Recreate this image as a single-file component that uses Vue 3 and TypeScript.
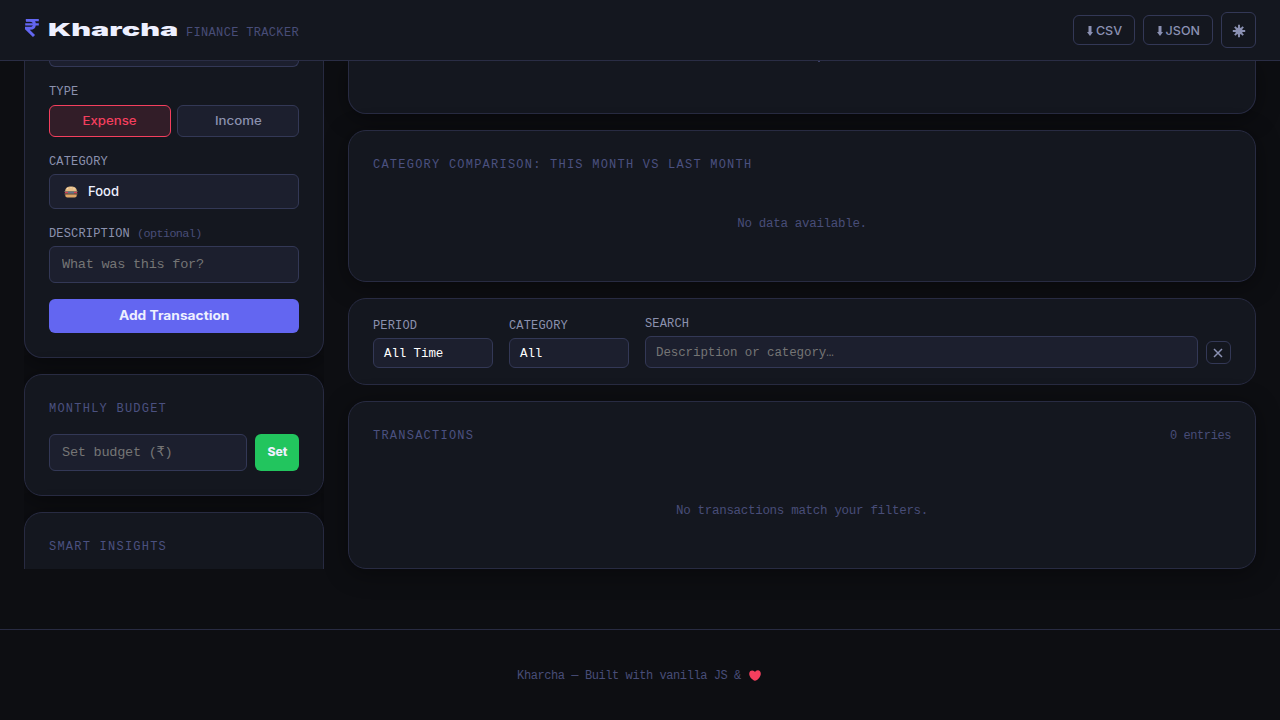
<script setup lang="ts">
import { ref } from 'vue'

type Kind = 'expense' | 'income'

const kind = ref<Kind>('expense')
const description = ref('')
const budget = ref('')
const search = ref('')
const exports: string[] = ['CSV', 'JSON']
</script>

<template>
  <div class="page">
    <header class="topbar">
      <div class="brand">
        <svg class="rupee" viewBox="0 0 14 18" width="14" height="18">
          <path d="M.8 1.2H13.8M.2 5.4H13.8" fill="none" stroke="#6366f1" stroke-width="2.3" />
          <path d="M1 1.2H5C8.2 1.2 9.4 3 9.4 5.2S8 9.3 5 9.3H1.2L9 17" fill="none" stroke="#6366f1" stroke-width="2.9" />
        </svg>
        <span class="name"><span class="wide">Kharcha</span></span>
        <span class="tagline">FINANCE TRACKER</span>
      </div>
      <div class="actions">
        <button v-for="e in exports" :key="e" class="btn" :class="e.toLowerCase()">
          <svg viewBox="0 0 6 10" width="6" height="10"><path d="M1.5 0h3v6H6L3 10 0 6h1.5z" fill="currentColor" /></svg>
          <span class="wide">{{ e }}</span>
        </button>
        <button class="btn theme" aria-label="Theme">
          <svg viewBox="-7 -7 14 14" width="14" height="14">
            <circle r="3.6" fill="currentColor" />
            <path d="M0-6.2V6.2M-6.2 0H6.2M-4.2-4.2L4.2 4.2M4.2-4.2L-4.2 4.2" stroke="currentColor" stroke-width="1.9" />
          </svg>
        </button>
      </div>
    </header>

    <div class="layout">
      <aside class="sidebar">
        <section class="card cut form">
          <div class="field-end"></div>
          <div class="label type-label">TYPE</div>
          <div class="toggle">
            <button :class="{ on: kind === 'expense' }" @click="kind = 'expense'"><span class="wide">Expense</span></button>
            <button :class="{ on: kind === 'income' }" @click="kind = 'income'"><span class="wide">Income</span></button>
          </div>
          <div class="label cat-label">CATEGORY</div>
          <button class="control category">
            <svg viewBox="0 0 14 12" width="14" height="12">
              <path d="M1.2 5C1.2 1.8 3.6.5 7 .5S12.8 1.8 12.8 5z" fill="#e6bd88" />
              <path d="M3.2 2.5h1M6.5 1.6h1M9.5 2.8h1" stroke="#fff0cf" stroke-width=".8" />
              <path d="M.5 5h13v1.2H.5z" fill="#8c7a62" />
              <path d="M1 6h12v1.2H1z" fill="#d83d5b" />
              <path d="M.5 7.2h13v1.3H.5z" fill="#86604d" />
              <path d="M4 5.6h6v1.8H4z" fill="#607287" />
              <path d="M1.3 8.4h11.4v1.2c0 1.2-.8 1.9-2 1.9H3.3c-1.2 0-2-.7-2-1.9z" fill="#dda566" />
            </svg>
            <span>Food</span>
          </button>
          <label class="label desc-label" for="desc">DESCRIPTION<span class="optional">(optional)</span></label>
          <input id="desc" v-model="description" class="control text" placeholder="What was this for?">
          <button class="submit"><span class="wide">Add Transaction</span></button>
        </section>

        <section class="card budget">
          <h2>MONTHLY BUDGET</h2>
          <div class="budget-row">
            <input v-model="budget" class="control text" placeholder="Set budget (₹)">
            <button class="set"><span class="wide">Set</span></button>
          </div>
        </section>

        <section class="card insights"><h2>SMART INSIGHTS</h2></section>
      </aside>

      <main class="content">
        <section class="card cut chart"><div class="descender"></div></section>
        <section class="card comparison">
          <h2>CATEGORY COMPARISON: THIS MONTH VS LAST MONTH</h2>
          <p class="empty">No data available.</p>
        </section>
        <section class="card filters">
          <div class="filter">
            <div class="label">PERIOD</div>
            <button class="control select">All Time</button>
          </div>
          <div class="filter">
            <div class="label">CATEGORY</div>
            <button class="control select">All</button>
          </div>
          <div class="filter grow">
            <label class="label" for="search">SEARCH</label>
            <input id="search" v-model="search" class="control search" placeholder="Description or category…">
          </div>
          <button class="clear" aria-label="Clear" @click="search = ''">
            <svg viewBox="0 0 10 10" width="10" height="10"><path d="M1 1l8 8M9 1L1 9" stroke="currentColor" stroke-width="1.5" /></svg>
          </button>
        </section>
        <section class="card transactions">
          <div class="head">
            <h2>TRANSACTIONS</h2>
            <span class="count">0 entries</span>
          </div>
          <p class="empty">No transactions match your filters.</p>
        </section>
      </main>
    </div>

    <footer class="footer">
      <span>Kharcha — Built with vanilla JS &amp;</span>
      <svg viewBox="0 0 12 11" width="12" height="11"><path d="M6 10.8C3.4 10.2.2 6.8.2 3.8.2 1.7 1.6.5 3.2.5 4.6.5 5.6 1.3 6 2.1 6.4 1.3 7.4.3 8.9.3c1.7 0 2.9 1.3 2.9 3.4C11.8 6.8 8.6 10.2 6 10.8z" fill="#f43f5e" /></svg>
    </footer>
  </div>
</template>

<style>
body { background: #0d0e12; }
</style>

<style scoped>
* { box-sizing: border-box; margin: 0; }
.page {
  height: 720px;
  overflow: hidden;
  display: flex;
  flex-direction: column;
  background: #0d0e12;
  color: #eef0ff;
  font: 12px/16px "Liberation Mono", monospace;
}
button, input { font: inherit; color: inherit; outline: none; }
button { padding: 0; display: flex; align-items: center; justify-content: center; cursor: pointer; white-space: nowrap; }
svg { flex: none; display: block; }
.wide { display: inline-block; font-family: Inter, sans-serif; letter-spacing: 0; }

.topbar {
  flex: none;
  height: 61px;
  padding: 0 24px;
  display: flex;
  align-items: center;
  justify-content: space-between;
  background: #14171f;
  border-bottom: 1px solid #2a2d45;
  position: relative;
  z-index: 1;
}
.brand { display: flex; align-items: center; height: 60px; }
.rupee { margin: 0 9px 4px 1px; }
.name { width: 138px; }
.name .wide { font-size: 18px; line-height: 24px; font-weight: 900; transform: scaleX(1.7); transform-origin: left; }
.tagline { font-size: 12px; letter-spacing: .33px; color: #484d78; padding-top: 5px; }
.actions { display: flex; align-items: center; gap: 8px; }
.btn { height: 30px; gap: 4px; border: 1px solid #333856; border-radius: 6px; background: transparent; color: #8b91b3; }
.btn .wide { font-size: 11.5px; font-weight: 500; transform: scaleX(1.09); padding-top: 1px; }
.btn svg { margin-top: 1px; }
.csv { width: 62px; }
.json { width: 70px; }
.theme { width: 35px; height: 36px; }

.layout { flex: none; height: 508px; padding: 0 24px; display: grid; grid-template-columns: 300px 1fr; gap: 24px; }
.sidebar, .content { display: flex; flex-direction: column; gap: 16px; min-width: 0; }
.sidebar { height: 508px; overflow: hidden; }
.card {
  flex: none;
  padding: 24px;
  background: #14171f;
  border: 1px solid #282b42;
  border-radius: 18px;
  box-shadow: 0 4px 24px rgba(0, 0, 0, .4);
}
.cut { border-top: 0; border-top-left-radius: 0; border-top-right-radius: 0; padding-top: 0; }
.form { height: 297px; display: flex; flex-direction: column; }
.field-end { flex: none; height: 6px; background: #1c1f2e; border: 1px solid #333856; border-top: 0; border-radius: 0 0 6px 6px; }
.label { font-size: 12px; line-height: 14px; letter-spacing: .16px; color: #8b91ae; }
.type-label { margin-top: 18px; }
.toggle { flex: none; display: grid; grid-template-columns: 1fr 1fr; gap: 6px; margin-top: 6px; height: 32px; }
.toggle button { border: 1px solid #333856; border-radius: 6px; background: #1c1f2e; color: #8b91ae; }
.toggle button.on { border-color: #f43f5e; background: #321d28; color: #f43f5e; }
.toggle .wide { font-size: 11.5px; font-weight: 500; transform: scaleX(1.15); }
.cat-label { margin-top: 18px; }
.control { border: 1px solid #333856; border-radius: 6px; background: #1c1f2e; }
.control::placeholder { color: #757575; opacity: 1; }
.category { flex: none; width: 100%; height: 35px; margin-top: 5px; padding-left: 14px; justify-content: flex-start; gap: 10px; font: 500 13px Inter, sans-serif; }
.category span { padding-bottom: 1px; }
.desc-label { margin-top: 18px; }
.optional { font-size: 11.8px; letter-spacing: -.6px; color: #484d78; margin-left: 7px; }
.text { width: 100%; height: 37px; padding: 0 12px; font-size: 13.6px; letter-spacing: -.28px; }
.desc-label + .text { flex: none; margin-top: 5px; }
.submit { flex: none; height: 34px; margin-top: 16px; border: 0; border-radius: 6px; background: #6366f1; }
.submit .wide { font-size: 12.5px; font-weight: 700; transform: scaleX(1.1); padding-bottom: 1px; }

h2 { font-size: 12px; line-height: 18px; font-weight: 400; letter-spacing: 1.23px; color: #4b5180; white-space: nowrap; padding-top: 1px; }
.budget { height: 122px; }
.budget-row { display: flex; gap: 8px; margin-top: 16px; }
.budget-row .text { flex: 1; min-width: 0; }
.set { width: 44px; height: 37px; border: 0; border-radius: 6px; background: #22c55e; }
.set .wide { font-size: 11.5px; font-weight: 800; transform: scaleX(1.06); padding-bottom: 1px; }
.insights { height: 122px; }

.chart { height: 53px; }
.descender { width: 2px; height: 1px; margin-left: 445px; background: #3a3f66; }
.comparison { height: 152px; }
.empty { text-align: center; color: #484d78; font-size: 12.5px; letter-spacing: -.3px; }
.comparison .empty { margin-top: 42px; }
.filters { height: 87px; padding: 16px 24px; display: flex; align-items: flex-end; box-shadow: none; }
.filter { width: 120px; margin-right: 16px; }
.filter.grow { flex: 1; width: auto; margin-right: 8px; }
.filter .label { display: block; }
.filter .control { width: 100%; display: flex; margin-top: 5px; padding: 1px 10px 0; font-size: 12.5px; letter-spacing: -.1px; }
.select { height: 30px; justify-content: flex-start; color: #fff; }
.search { height: 32px; }
.clear { width: 25px; height: 23px; margin-bottom: 4px; padding-right: 1px; border: 1px solid #333856; border-radius: 6px; background: transparent; color: #8b91b3; }
.transactions { height: 168px; }
.head { display: flex; justify-content: space-between; }
.count { font-size: 12px; line-height: 18px; letter-spacing: -.42px; color: #484d78; padding-top: 1px; }
.transactions .empty { margin-top: 58px; }

.footer {
  flex: none;
  height: 91px;
  margin-top: 60px;
  border-top: 1px solid #282b42;
  display: flex;
  justify-content: center;
  align-items: center;
  gap: 8px;
  padding-right: 2px;
  font-size: 12px;
  letter-spacing: -.42px;
  color: #484d78;
}
.footer span { padding-top: 1px; }
</style>
